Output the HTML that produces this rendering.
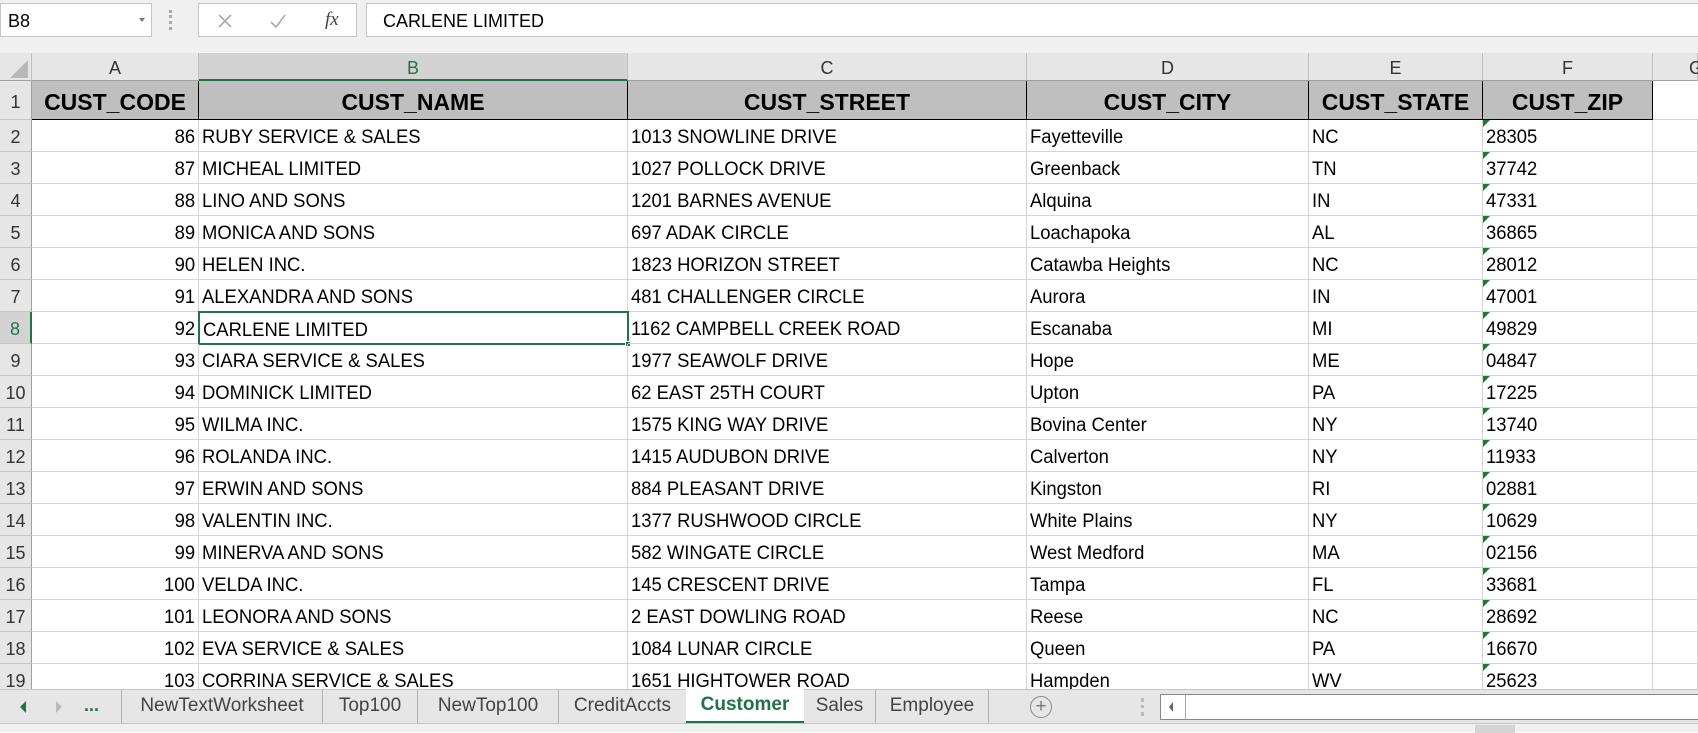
<!DOCTYPE html>
<html><head><meta charset="utf-8"><style>
*{box-sizing:border-box;margin:0;padding:0}
body{width:1698px;height:732px;overflow:hidden;background:#fff;font-family:"Liberation Sans",Arial,sans-serif;position:relative;color:#000}
.top{position:absolute;left:0;top:0;width:1698px;height:53px;background:#f0f0f0}
.box{position:absolute;background:#fff;border:1px solid #c6c6c6}
.ab{position:absolute}
.colh{position:absolute;top:53px;height:28px;background:#e6e6e6;border-right:1px solid #c0c0c0;border-bottom:1px solid #a0a0a0;font-size:18px;color:#333;text-align:center;line-height:30px}
.row{position:absolute;left:0;height:32px;width:1698px}
.rn{position:absolute;left:0;width:32px;height:32px;background:#e6e6e6;border-right:1px solid #a0a0a0;border-bottom:1px solid #c6c6c6;font-size:18px;color:#333;text-align:center;line-height:35px}
.c{position:absolute;height:32px;border-right:1px solid #d4d4d4;border-bottom:1px solid #d4d4d4;font-size:19px;line-height:36px;white-space:nowrap;overflow:visible;padding:0 3px}
.c span{display:inline-block;transform:scaleX(.97);transform-origin:0 50%}
.c.r{text-align:right}
.c.r span{transform-origin:100% 50%}
.h .c{background:#bfbfbf;border:none;border-right:1px solid #000;border-bottom:1.5px solid #000;font-weight:bold;font-size:23px;text-align:center;line-height:42px;height:39px}
.h .c span{transform-origin:50% 50%;transform:scaleX(1)}
.A{left:32px;width:167px}.B{left:199px;width:429px}.C{left:628px;width:399px}.D{left:1027px;width:282px}.E{left:1309px;width:174px}.F{left:1483px;width:170px}.G{left:1653px;width:45px}
.F.t::before{content:"";position:absolute;left:0;top:0;border-top:7px solid #1e7b1e;border-right:7px solid transparent}
.tabs{position:absolute;left:0;top:689px;width:1698px;height:34px;background:#e6e6e6;border-top:1px solid #c6c6c6;font-size:19px;color:#444}
.tab{position:absolute;top:0;height:33px;line-height:32px;text-align:center;border-left:1px solid #b0b0b0;white-space:nowrap}
.status{position:absolute;left:0;top:723px;width:1698px;height:9px;background:#f0f0f0;border-top:1px solid #c6c6c6}
</style></head><body>
<div class="top">
 <div class="box" style="left:0;top:3px;width:152px;height:34px;font-size:18px;line-height:34px;padding-left:7px">B8<span style="position:absolute;left:138px;top:14px;border-top:4px solid #777;border-left:3px solid transparent;border-right:3px solid transparent"></span></div>
 <div class="ab" style="left:169px;top:10px;width:3px;height:20px;border-left:3px dotted #aaa"></div>
 <div class="box" style="left:198px;top:3px;width:159px;height:34px">
  <svg class="ab" style="left:18px;top:9px" width="16" height="16"><path d="M2 2L14 14M14 2L2 14" stroke="#aaa" stroke-width="1.6"/></svg>
  <svg class="ab" style="left:70px;top:9px" width="18" height="16"><path d="M2 9L7 14L16 2" stroke="#aaa" stroke-width="1.6" fill="none"/></svg>
  <span class="ab" style="left:126px;top:5px;font-family:'Liberation Serif',serif;font-style:italic;font-size:19px;color:#444">fx</span>
 </div>
 <div class="box" style="left:366px;top:3px;width:1340px;height:34px;font-size:18px;line-height:34px;padding-left:16px">CARLENE LIMITED</div>
</div>
<div class="colh" style="left:0;width:32px"><svg class="ab" style="left:10px;top:7px" width="18" height="18"><path d="M18 0L18 18L0 18Z" fill="#b8b8b8"/></svg></div>
<div class="colh" style="left:32px;width:167px">A</div>
<div class="colh" style="left:199px;width:429px;background:#d3d3d3;color:#217346;border-bottom:2px solid #217346">B</div>
<div class="colh" style="left:628px;width:399px">C</div>
<div class="colh" style="left:1027px;width:282px">D</div>
<div class="colh" style="left:1309px;width:174px">E</div>
<div class="colh" style="left:1483px;width:170px">F</div>
<div class="colh" style="left:1653px;width:45px;text-align:left;padding-left:36px">G</div>

<div class="row h" style="top:81px;height:39px"><div class="rn" style="height:39px;line-height:42px">1</div>
<div class="c A"><span>CUST_CODE</span></div><div class="c B"><span>CUST_NAME</span></div><div class="c C"><span>CUST_STREET</span></div><div class="c D"><span>CUST_CITY</span></div><div class="c E"><span>CUST_STATE</span></div><div class="c F"><span>CUST_ZIP</span></div><div class="c G" style="background:#fff;border:none;border-bottom:1px solid #d4d4d4"></div></div>

<div class="row" style="top:120px"><div class="rn">2</div><div class="c A r"><span>86</span></div><div class="c B"><span>RUBY SERVICE &amp; SALES</span></div><div class="c C"><span>1013 SNOWLINE DRIVE</span></div><div class="c D"><span>Fayetteville</span></div><div class="c E"><span>NC</span></div><div class="c F t"><span>28305</span></div><div class="c G"></div></div>
<div class="row" style="top:152px"><div class="rn">3</div><div class="c A r"><span>87</span></div><div class="c B"><span>MICHEAL LIMITED</span></div><div class="c C"><span>1027 POLLOCK DRIVE</span></div><div class="c D"><span>Greenback</span></div><div class="c E"><span>TN</span></div><div class="c F t"><span>37742</span></div><div class="c G"></div></div>
<div class="row" style="top:184px"><div class="rn">4</div><div class="c A r"><span>88</span></div><div class="c B"><span>LINO AND SONS</span></div><div class="c C"><span>1201 BARNES AVENUE</span></div><div class="c D"><span>Alquina</span></div><div class="c E"><span>IN</span></div><div class="c F t"><span>47331</span></div><div class="c G"></div></div>
<div class="row" style="top:216px"><div class="rn">5</div><div class="c A r"><span>89</span></div><div class="c B"><span>MONICA AND SONS</span></div><div class="c C"><span>697 ADAK CIRCLE</span></div><div class="c D"><span>Loachapoka</span></div><div class="c E"><span>AL</span></div><div class="c F t"><span>36865</span></div><div class="c G"></div></div>
<div class="row" style="top:248px"><div class="rn">6</div><div class="c A r"><span>90</span></div><div class="c B"><span>HELEN INC.</span></div><div class="c C"><span>1823 HORIZON STREET</span></div><div class="c D"><span>Catawba Heights</span></div><div class="c E"><span>NC</span></div><div class="c F t"><span>28012</span></div><div class="c G"></div></div>
<div class="row" style="top:280px"><div class="rn">7</div><div class="c A r"><span>91</span></div><div class="c B"><span>ALEXANDRA AND SONS</span></div><div class="c C"><span>481 CHALLENGER CIRCLE</span></div><div class="c D"><span>Aurora</span></div><div class="c E"><span>IN</span></div><div class="c F t"><span>47001</span></div><div class="c G"></div></div>
<div class="row" style="top:312px"><div class="rn" style="background:#d3d3d3;color:#217346;border-right:2px solid #217346">8</div><div class="c A r"><span>92</span></div><div class="c B" style="border:2px solid #217346;left:198px;width:431px;top:-1px;height:34px;line-height:36px"><span>CARLENE LIMITED</span><i style="position:absolute;right:-4px;bottom:-4px;width:6px;height:6px;background:#217346;border:1px solid #fff"></i></div><div class="c C"><span>1162 CAMPBELL CREEK ROAD</span></div><div class="c D"><span>Escanaba</span></div><div class="c E"><span>MI</span></div><div class="c F t"><span>49829</span></div><div class="c G"></div></div>
<div class="row" style="top:344px"><div class="rn">9</div><div class="c A r"><span>93</span></div><div class="c B"><span>CIARA SERVICE &amp; SALES</span></div><div class="c C"><span>1977 SEAWOLF DRIVE</span></div><div class="c D"><span>Hope</span></div><div class="c E"><span>ME</span></div><div class="c F t"><span>04847</span></div><div class="c G"></div></div>
<div class="row" style="top:376px"><div class="rn">10</div><div class="c A r"><span>94</span></div><div class="c B"><span>DOMINICK LIMITED</span></div><div class="c C"><span>62 EAST 25TH COURT</span></div><div class="c D"><span>Upton</span></div><div class="c E"><span>PA</span></div><div class="c F t"><span>17225</span></div><div class="c G"></div></div>
<div class="row" style="top:408px"><div class="rn">11</div><div class="c A r"><span>95</span></div><div class="c B"><span>WILMA INC.</span></div><div class="c C"><span>1575 KING WAY DRIVE</span></div><div class="c D"><span>Bovina Center</span></div><div class="c E"><span>NY</span></div><div class="c F t"><span>13740</span></div><div class="c G"></div></div>
<div class="row" style="top:440px"><div class="rn">12</div><div class="c A r"><span>96</span></div><div class="c B"><span>ROLANDA INC.</span></div><div class="c C"><span>1415 AUDUBON DRIVE</span></div><div class="c D"><span>Calverton</span></div><div class="c E"><span>NY</span></div><div class="c F t"><span>11933</span></div><div class="c G"></div></div>
<div class="row" style="top:472px"><div class="rn">13</div><div class="c A r"><span>97</span></div><div class="c B"><span>ERWIN AND SONS</span></div><div class="c C"><span>884 PLEASANT DRIVE</span></div><div class="c D"><span>Kingston</span></div><div class="c E"><span>RI</span></div><div class="c F t"><span>02881</span></div><div class="c G"></div></div>
<div class="row" style="top:504px"><div class="rn">14</div><div class="c A r"><span>98</span></div><div class="c B"><span>VALENTIN INC.</span></div><div class="c C"><span>1377 RUSHWOOD CIRCLE</span></div><div class="c D"><span>White Plains</span></div><div class="c E"><span>NY</span></div><div class="c F t"><span>10629</span></div><div class="c G"></div></div>
<div class="row" style="top:536px"><div class="rn">15</div><div class="c A r"><span>99</span></div><div class="c B"><span>MINERVA AND SONS</span></div><div class="c C"><span>582 WINGATE CIRCLE</span></div><div class="c D"><span>West Medford</span></div><div class="c E"><span>MA</span></div><div class="c F t"><span>02156</span></div><div class="c G"></div></div>
<div class="row" style="top:568px"><div class="rn">16</div><div class="c A r"><span>100</span></div><div class="c B"><span>VELDA INC.</span></div><div class="c C"><span>145 CRESCENT DRIVE</span></div><div class="c D"><span>Tampa</span></div><div class="c E"><span>FL</span></div><div class="c F t"><span>33681</span></div><div class="c G"></div></div>
<div class="row" style="top:600px"><div class="rn">17</div><div class="c A r"><span>101</span></div><div class="c B"><span>LEONORA AND SONS</span></div><div class="c C"><span>2 EAST DOWLING ROAD</span></div><div class="c D"><span>Reese</span></div><div class="c E"><span>NC</span></div><div class="c F t"><span>28692</span></div><div class="c G"></div></div>
<div class="row" style="top:632px"><div class="rn">18</div><div class="c A r"><span>102</span></div><div class="c B"><span>EVA SERVICE &amp; SALES</span></div><div class="c C"><span>1084 LUNAR CIRCLE</span></div><div class="c D"><span>Queen</span></div><div class="c E"><span>PA</span></div><div class="c F t"><span>16670</span></div><div class="c G"></div></div>
<div class="row" style="top:664px"><div class="rn">19</div><div class="c A r"><span>103</span></div><div class="c B"><span>CORRINA SERVICE &amp; SALES</span></div><div class="c C"><span>1651 HIGHTOWER ROAD</span></div><div class="c D"><span>Hampden</span></div><div class="c E"><span>WV</span></div><div class="c F t"><span>25623</span></div><div class="c G"></div></div>

<div class="tabs">
 <div class="ab" style="left:20px;top:11px;border-right:6px solid #217346;border-top:6px solid transparent;border-bottom:6px solid transparent"></div>
 <div class="ab" style="left:56px;top:11px;border-left:6px solid #bbb;border-top:6px solid transparent;border-bottom:6px solid transparent"></div>
 <div class="ab" style="left:84px;top:0;font-weight:bold;color:#217346;font-size:18px;line-height:30px">...</div>
 <div class="tab" style="left:121px;width:201px">NewTextWorksheet</div>
 <div class="tab" style="left:322px;width:95px">Top100</div>
 <div class="tab" style="left:417px;width:141px">NewTop100</div>
 <div class="tab" style="left:558px;width:128px">CreditAccts</div>
 <div class="tab" style="left:686px;width:118px;background:#fff;color:#217346;font-weight:bold;border-bottom:3px solid #217346;border-left:none;top:-1px;height:35px">Customer</div>
 <div class="tab" style="left:804px;width:71px;border-left:none">Sales</div>
 <div class="tab" style="left:875px;width:114px;border-right:1px solid #b0b0b0">Employee</div>
 <div class="ab" style="left:1030px;top:6px;width:22px;height:22px;border:1.5px solid #888;border-radius:50%;text-align:center;line-height:19px;font-size:19px;color:#777">+</div>
 <div class="ab" style="left:1141px;top:8px;height:18px;border-left:3px dotted #bbb"></div>
 <div class="ab" style="left:1160px;top:4px;width:560px;height:26px;background:#fff;border:1px solid #888"><div class="ab" style="left:24px;top:0;height:24px;border-left:1px solid #aaa"></div><div class="ab" style="left:8px;top:7px;border-right:4px solid #666;border-top:5px solid transparent;border-bottom:5px solid transparent"></div></div>
</div>
<div class="status"><div class="ab" style="left:1475px;top:1px;width:40px;height:8px;background:#d4d4d4"></div></div>
</body></html>
